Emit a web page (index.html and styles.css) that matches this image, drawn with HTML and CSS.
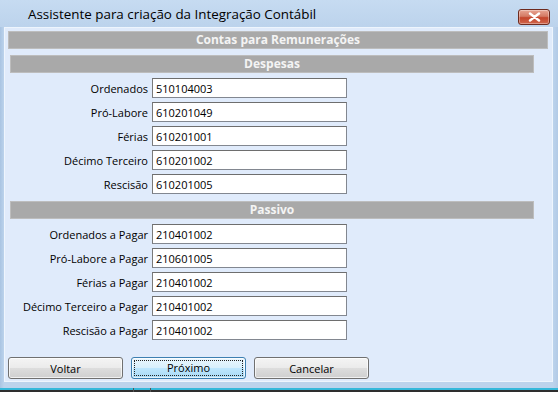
FILE: index.html
```html
<!DOCTYPE html>
<html lang="pt-BR">
<head>
    <meta charset="UTF-8">
    <title>Assistente para criação da Integração Contábil</title>
    <link rel="stylesheet" href="styles.css">
</head>
<body>
    <div class="window">
        <div class="titlebar">
            <span class="title">Assistente para criação da Integração Contábil</span>
            <button class="close-button">
                <svg width="13" height="10" viewBox="0 0 13 10">
                    <path d="M2 1.5 L11 8.5 M11 1.5 L2 8.5" stroke="#ffffff" stroke-width="2.4" stroke-linecap="round"/>
                </svg>
            </button>
        </div>
        <div class="client">
            <div class="panel-title">Contas para Remunerações</div>

            <div class="group">
                <div class="group-title">Despesas</div>
                <div class="field"><label>Ordenados</label><input type="text" value="510104003"></div>
                <div class="field"><label>Pró-Labore</label><input type="text" value="610201049"></div>
                <div class="field"><label>Férias</label><input type="text" value="610201001"></div>
                <div class="field"><label>Décimo Terceiro</label><input type="text" value="610201002"></div>
                <div class="field"><label>Rescisão</label><input type="text" value="610201005"></div>
            </div>

            <div class="group">
                <div class="group-title">Passivo</div>
                <div class="field"><label>Ordenados a Pagar</label><input type="text" value="210401002"></div>
                <div class="field"><label>Pró-Labore a Pagar</label><input type="text" value="210601005"></div>
                <div class="field"><label>Férias a Pagar</label><input type="text" value="210401002"></div>
                <div class="field"><label>Décimo Terceiro a Pagar</label><input type="text" value="210401002"></div>
                <div class="field"><label>Rescisão a Pagar</label><input type="text" value="210401002"></div>
            </div>

            <div class="buttons">
                <button class="btn">Voltar</button>
                <button class="btn btn-default"><span class="focus">Próximo</span></button>
                <button class="btn">Cancelar</button>
            </div>
        </div>
    </div>
    <div class="taskbar">
        <span class="tick"></span>
        <span class="tick"></span>
    </div>
</body>
</html>
```

FILE: styles.css
```css
html, body {
    margin: 0;
    padding: 0;
}
body {
    width: 558px;
    height: 394px;
    overflow: hidden;
    background-color: #ffffff;
    font-family: "Open Sans", "Liberation Sans", sans-serif;
    font-size: 11px;
    color: #000;
}
.window {
    height: 390px;
    box-sizing: border-box;
    display: flex;
    flex-direction: column;
    padding: 0 5px 6px 4px;
    background: linear-gradient(to right, #a9c4e2 0px, #bcd3ec 4px, #bcd3ec 553px, #b2cae6 558px);
    border-bottom: 2px solid #35b8da;
}
.titlebar {
    height: 27px;
    display: flex;
    align-items: flex-start;
    justify-content: space-between;
    background: linear-gradient(to bottom, #c6dbf1, #bcd3ec);
    margin: 0 -5px 0 -4px;
    padding: 0 8px 0 28px;
}
.title {
    font-size: 13.4px;
    line-height: 29px;
    color: #000;
}
.close-button {
    margin-top: 9px;
    width: 32px;
    height: 16px;
    padding: 0;
    border: 1px solid #6d2a1e;
    border-radius: 3px;
    background: linear-gradient(to bottom, #e8a593 0%, #d47a64 45%, #c4452c 55%, #d0664c 100%);
    display: flex;
    align-items: center;
    justify-content: center;
    box-shadow: inset 0 0 0 1px rgba(255,255,255,0.35);
}
.client {
    flex: 1;
    background-color: #e0ebfb;
    border: 1px solid #eef5fd;
    padding: 3px 4px 0 3px;
    display: flex;
    flex-direction: column;
}
.panel-title,
.group-title {
    height: 18px;
    box-sizing: border-box;
    background-color: #a9a9a9;
    border: 1px solid #bdbdbd;
    color: #f4f4f4;
    font-weight: bold;
    font-size: 12px;
    line-height: 16px;
    text-align: center;
}
.group {
    width: 524px;
    margin-left: 2px;
    margin-top: 6px;
}
.group + .group {
    margin-top: 7px;
}
.group-title {
    margin-bottom: 5px;
}
.field {
    display: flex;
    align-items: center;
    height: 20px;
    margin-bottom: 4px;
}
.field:last-child {
    margin-bottom: 0;
}
.field label {
    width: 138px;
    padding-right: 4px;
    text-align: right;
    white-space: nowrap;
}
.field input {
    width: 195px;
    height: 20px;
    box-sizing: border-box;
    margin: 0;
    padding: 0 3px;
    border: 1px solid #828790;
    border-top-color: #6e6e6e;
    border-left-color: #7a7a7a;
    background: #fff;
    font-family: "Open Sans", "Liberation Sans", sans-serif;
    font-size: 11px;
    color: #000;
    outline: none;
}
.buttons {
    display: flex;
    gap: 8px;
    margin-top: 17px;
}
.btn {
    width: 115px;
    height: 22px;
    padding: 0;
    border: 1px solid #707070;
    border-radius: 3px;
    background: linear-gradient(to bottom, #f4f4f4 0%, #ebebeb 48%, #dddddd 52%, #cfcfcf 100%);
    box-shadow: inset 0 0 0 1px rgba(255,255,255,0.7);
    font-family: "Open Sans", "Liberation Sans", sans-serif;
    font-size: 11px;
    color: #000;
}
.btn-default {
    border-color: #3c7fb1;
    background: linear-gradient(to bottom, #eaf6fd 0%, #d9f0fc 48%, #bee6fd 52%, #a7d9f5 100%);
    padding: 2px;
}
.focus {
    display: block;
    height: 100%;
    box-sizing: border-box;
    border: 1px dotted #222;
    line-height: 14px;
}
.taskbar {
    height: 2px;
    background-color: #2e2e2e;
    position: relative;
}
.tick {
    position: absolute;
    bottom: 0;
    width: 1px;
    height: 4px;
    background-color: #555;
}
.tick:first-child {
    left: 133px;
}
.tick:last-child {
    left: 150px;
}
```
